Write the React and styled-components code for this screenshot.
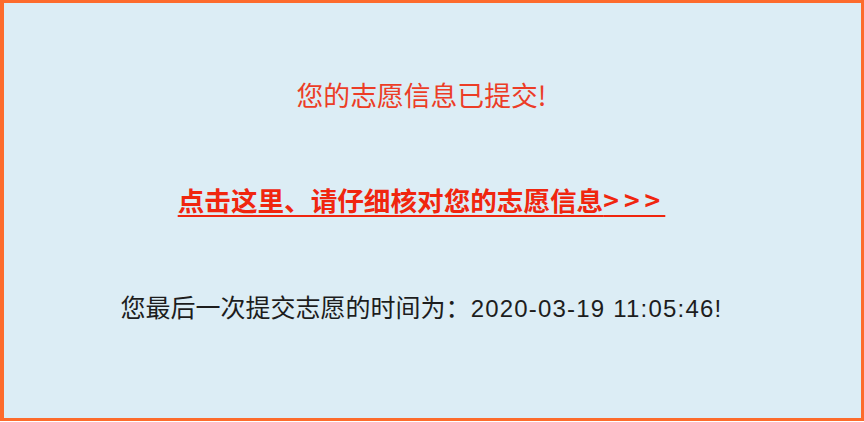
import React from "react";
import styled, { createGlobalStyle } from "styled-components";

const Global = createGlobalStyle`
  html, body { margin: 0; padding: 0; background: #ffffff; }
  body { font-family: "Noto Sans CJK SC", "Noto Sans", sans-serif; }
`;

const Panel = styled.div`
  box-sizing: border-box;
  width: 864px;
  height: 421px;
  border: 3px solid #fd6b2c;
  border-left-width: 4px;
  background: #dcedf5;
  display: flex;
  flex-direction: column;
  align-items: center;
  padding-top: 72px;
  padding-right: 22px;
`;

const Notice = styled.p`
  margin: 0;
  font-size: 26.8px;
  line-height: 40px;
  color: #ec3d27;
`;

const DetailLink = styled.a`
  margin-top: 65px;
  font-size: 26.6px;
  line-height: 40px;
  font-weight: 700;
  color: #f0260f;
  text-decoration: underline;
  text-decoration-thickness: 2px;
  text-underline-offset: 4px;
  cursor: pointer;
`;

const Arrows = styled.span`
  letter-spacing: 5px;
`;

const TimeLine = styled.p`
  margin: 66px 0 0;
  font-size: 25px;
  line-height: 40px;
  color: #1d1d1d;
`;

const Stamp = styled.span`
  font-family: "Liberation Sans", "Noto Sans CJK SC", sans-serif;
  font-size: 24px;
  letter-spacing: 1.2px;
`;

export default function App() {
  return (
    <>
      <Global />
      <Panel>
        <Notice>您的志愿信息已提交!</Notice>
        <DetailLink>
          点击这里、请仔细核对您的志愿信息<Arrows>&gt;&gt;&gt;</Arrows>
        </DetailLink>
        <TimeLine>
          您最后一次提交志愿的时间为：<Stamp>2020-03-19 11:05:46!</Stamp>
        </TimeLine>
      </Panel>
    </>
  );
}
